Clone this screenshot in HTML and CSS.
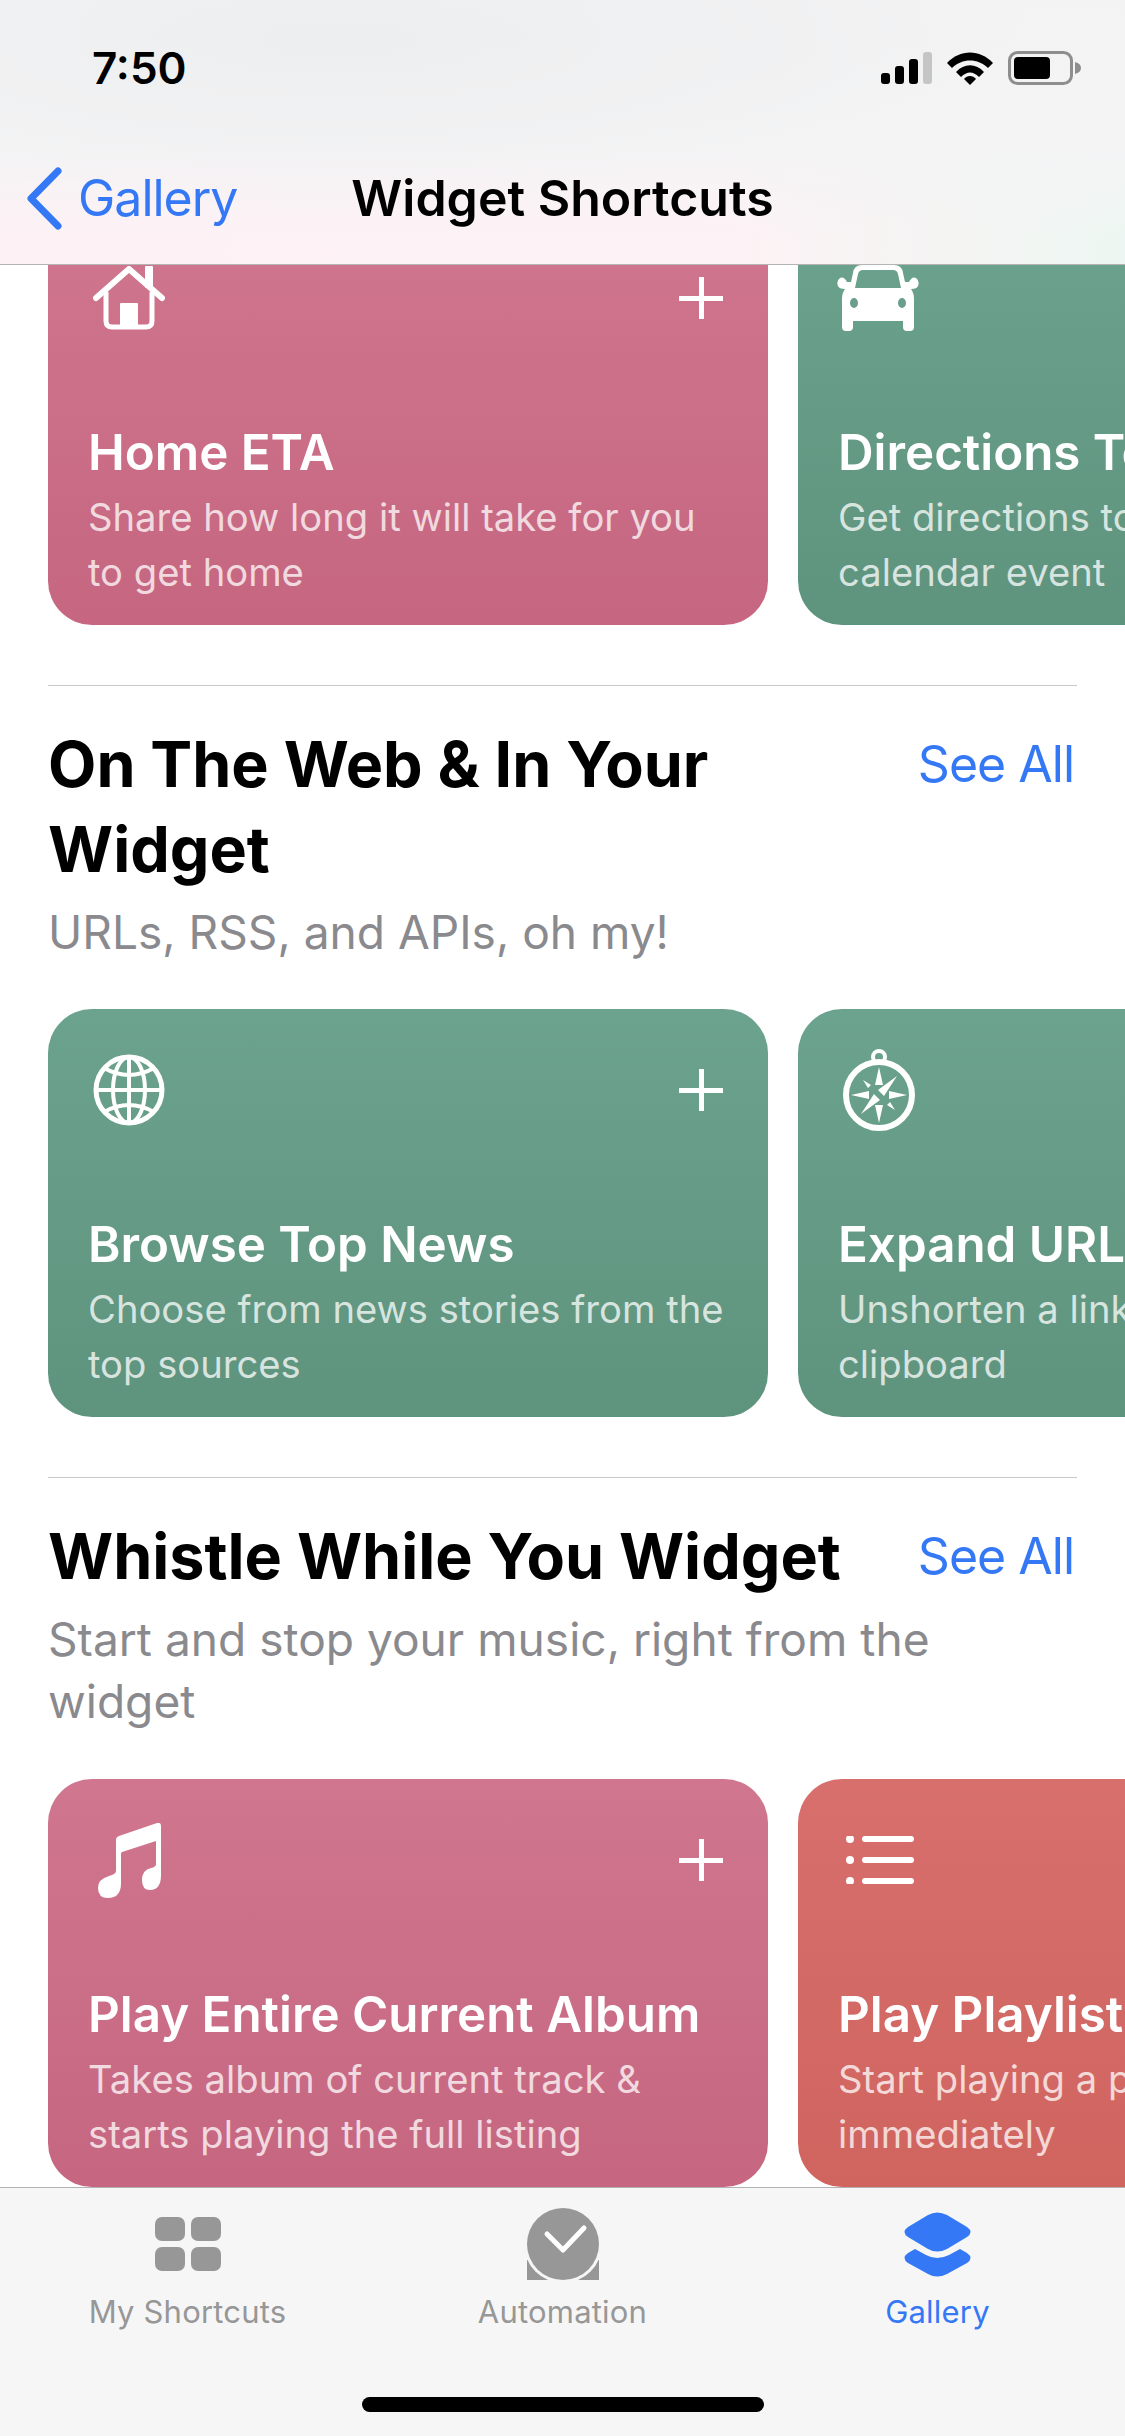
FILE: index.html
```html
<!DOCTYPE html>
<html lang="en">
<head>
    <meta charset="UTF-8">
    <title>Widget Shortcuts</title>
    <link rel="stylesheet" href="styles.css">
</head>
<body>
    <div class="phone">
        <!-- top bar -->
        <header class="top-bar">
            <div class="status-bar">
                <span class="time">7:50</span>
                <div class="status-icons">
                    <svg width="51" height="32" viewBox="0 0 51 32">
                        <rect x="0" y="21" width="9" height="11" rx="3" fill="#000"/>
                        <rect x="14" y="14" width="9" height="18" rx="3" fill="#000"/>
                        <rect x="28" y="7" width="9" height="25" rx="3" fill="#000"/>
                        <rect x="42" y="0" width="9" height="32" rx="3" fill="#c4c6c6"/>
                    </svg>
                    <svg width="46" height="33" viewBox="0 0 46 33">
                        <path d="M0 11 C13 -3 33 -3 46 11 L41 16 C31 6 15 6 5 16 Z" fill="#000"/>
                        <path d="M9 20 C17 11 29 11 37 20 L32 25 C26 19 20 19 14 25 Z" fill="#000"/>
                        <path d="M17 27 C20 23 26 23 29 27 L23 33 Z" fill="#000"/>
                    </svg>
                    <svg width="74" height="34" viewBox="0 0 74 34">
                        <rect x="1.5" y="1.5" width="62" height="31" rx="8" fill="none" stroke="#8e8e8e" stroke-width="3"/>
                        <rect x="6" y="6" width="36" height="22" rx="4" fill="#000"/>
                        <path d="M67 11 C71 12 73 14 73 17 C73 20 71 22 67 23 Z" fill="#8e8e8e"/>
                    </svg>
                </div>
            </div>
            <nav class="nav-row">
                <div class="back">
                    <svg width="36" height="63" viewBox="0 0 36 63">
                        <path d="M32 4 L5 31.5 L32 59" fill="none" stroke="#3478f6" stroke-width="7" stroke-linecap="round" stroke-linejoin="round"/>
                    </svg>
                    <span>Gallery</span>
                </div>
                <div class="nav-title">Widget Shortcuts</div>
                <div></div>
            </nav>
        </header>

        <main class="content">
            <div class="first-row cards">
                <div class="card pink">
                    <div class="card-top">
                        <svg class="icon" width="72" height="64" viewBox="0 0 72 64">
                            <path d="M3 32 L36 3 L69 32" fill="none" stroke="#fff" stroke-width="6" stroke-linecap="round" stroke-linejoin="round"/>
                            <path d="M13 26 V55 Q13 61 19 61 H53 Q59 61 59 55 V26" fill="none" stroke="#fff" stroke-width="5"/>
                            <rect x="27" y="37" width="18" height="25" rx="1" fill="#fff"/>
                            <rect x="52" y="0" width="8" height="22" rx="1" fill="#fff"/>
                        </svg>
                        <span class="plus"></span>
                    </div>
                    <div class="card-text">
                        <div class="card-title">Home ETA</div>
                        <div class="card-sub">Share how long it will take for you<br>to get home</div>
                    </div>
                </div>
                <div class="card green">
                    <div class="card-top">
                        <svg class="icon car" width="82" height="66" viewBox="0 0 82 66">
                            <path fill-rule="evenodd" fill="#fff" d="M16 8 Q17 0 25 0 H57 Q65 0 66 8 L68 17 H72 Q75 11 79 13 Q83 16 81 21 Q80 24 74 24 Q77 28 77 34 V62 Q77 66 73 66 H70 Q66 66 66 62 V56 H16 V62 Q16 66 12 66 H9 Q5 66 5 62 V34 Q5 28 8 24 Q2 24 1 21 Q-1 16 3 13 Q7 11 10 17 H14 Z M21 9 L18 23 H64 L61 9 Q60 5 56 5 H26 Q22 5 21 9 Z M13 38 A4 5 0 1 0 21 38 A4 5 0 1 0 13 38 Z M61 38 A4 5 0 1 0 69 38 A4 5 0 1 0 61 38 Z"/>
                        </svg>
                    </div>
                    <div class="card-text">
                        <div class="card-title">Directions To Next Event</div>
                        <div class="card-sub">Get directions to your next<br>calendar event</div>
                    </div>
                </div>
            </div>

            <section class="section">
                <div class="section-head">
                    <div class="section-titles">
                        <h2>On The Web &amp; In Your<br>Widget</h2>
                        <p>URLs, RSS, and APIs, oh my!</p>
                    </div>
                    <a class="see-all">See All</a>
                </div>
                <div class="cards">
                    <div class="card green">
                        <div class="card-top">
                            <svg class="icon" width="72" height="72" viewBox="0 0 72 72" fill="none" stroke="#fff">
                                <circle cx="36" cy="36" r="33" stroke-width="5"/>
                                <ellipse cx="36" cy="36" rx="16" ry="33" stroke-width="4"/>
                                <path d="M36 3 V69 M3 36 H69" stroke-width="4"/>
                                <path d="M11 14 Q36 28 61 14 M11 58 Q36 44 61 58" stroke-width="4"/>
                            </svg>
                            <span class="plus"></span>
                        </div>
                        <div class="card-text">
                            <div class="card-title">Browse Top News</div>
                            <div class="card-sub">Choose from news stories from the<br>top sources</div>
                        </div>
                    </div>
                    <div class="card green">
                        <div class="card-top">
                            <svg class="icon compass" width="72" height="82" viewBox="0 0 72 82">
                                <circle cx="36" cy="8" r="6" fill="none" stroke="#fff" stroke-width="4"/>
                                <circle cx="36" cy="46" r="33" fill="none" stroke="#fff" stroke-width="6"/>
                                <path fill="#fff" d="M36 18 L40 36 H32 Z M36 74 L32 56 H40 Z M8 46 L26 42 V50 Z M64 46 L46 50 V42 Z"/>
                                <path fill="#fff" d="M54 27 L41 47 L35 41 Z M18 65 L31 45 L37 51 Z"/>
                                <path fill="#fff" d="M20 31 L28 36 L25 39 Z M52 61 L44 56 L47 53 Z"/>
                            </svg>
                        </div>
                        <div class="card-text">
                            <div class="card-title">Expand URL</div>
                            <div class="card-sub">Unshorten a link on your<br>clipboard</div>
                        </div>
                    </div>
                </div>
            </section>

            <section class="section">
                <div class="section-head">
                    <div class="section-titles">
                        <h2>Whistle While You Widget</h2>
                        <p>Start and stop your music, right from the<br>widget</p>
                    </div>
                    <a class="see-all">See All</a>
                </div>
                <div class="cards">
                    <div class="card pink">
                        <div class="card-top">
                            <svg class="icon music" width="63" height="75" viewBox="0 0 63 75">
                                <path fill="#fff" d="M18 17 Q18 14 21 13 L59 0 Q63 -1 63 3 V52 Q63 67 52 67 Q44 67 44 57 Q44 47 53 45 Q58 44 58 41 V18 L24 29 Q23 29 23 32 V60 Q23 75 10 75 Q0 75 0 65 Q0 56 11 53 Q18 51 18 48 Z"/>
                            </svg>
                            <span class="plus"></span>
                        </div>
                        <div class="card-text">
                            <div class="card-title">Play Entire Current Album</div>
                            <div class="card-sub">Takes album of current track &amp;<br>starts playing the full listing</div>
                        </div>
                    </div>
                    <div class="card red">
                        <div class="card-top">
                            <svg class="icon list" width="68" height="48" viewBox="0 0 68 48" fill="#fff">
                                <circle cx="4" cy="3" r="4"/><rect x="16" y="0" width="52" height="6" rx="3"/>
                                <circle cx="4" cy="24" r="4"/><rect x="16" y="21" width="52" height="6" rx="3"/>
                                <circle cx="4" cy="45" r="4"/><rect x="16" y="42" width="52" height="6" rx="3"/>
                            </svg>
                        </div>
                        <div class="card-text">
                            <div class="card-title">Play Playlist</div>
                            <div class="card-sub">Start playing a playlist<br>immediately</div>
                        </div>
                    </div>
                </div>
            </section>
        </main>

        <!-- tab bar -->
        <footer class="tab-bar">
            <div class="tabs">
                <div class="tab">
                    <div class="tab-icon">
                        <svg width="66" height="54" viewBox="0 0 66 54" fill="#979797">
                            <rect x="0" y="0" width="30" height="24" rx="7"/>
                            <rect x="36" y="0" width="30" height="24" rx="7"/>
                            <rect x="0" y="30" width="30" height="24" rx="7"/>
                            <rect x="36" y="30" width="30" height="24" rx="7"/>
                        </svg>
                    </div>
                    <span>My Shortcuts</span>
                </div>
                <div class="tab">
                    <div class="tab-icon">
                        <svg width="72" height="72" viewBox="0 0 72 72">
                            <rect x="0" y="52" width="72" height="20" fill="#979797"/>
                            <circle cx="36" cy="36" r="39" fill="#f6f6f6"/>
                            <circle cx="36" cy="36" r="36" fill="#979797"/>
                            <path d="M20 26 L36 42 L57 20" fill="none" stroke="#fff" stroke-width="5" stroke-linecap="round" stroke-linejoin="round"/>
                        </svg>
                    </div>
                    <span>Automation</span>
                </div>
                <div class="tab active">
                    <div class="tab-icon">
                        <svg width="67" height="65" viewBox="0 0 67 65" fill="#3478f6">
                            <path d="M24 3 Q33 -2 43 3 L63 15 Q70 20 63 25 L43 37 Q33 42 24 37 L4 25 Q-3 20 4 15 Z"/>
                            <path d="M11 37 L22 43 Q33 49 45 43 L56 37 L63 41 Q70 46 63 51 L43 62 Q33 67 24 62 L4 51 Q-3 46 4 41 Z"/>
                        </svg>
                    </div>
                    <span>Gallery</span>
                </div>
            </div>
            <div class="home-indicator"></div>
        </footer>
    </div>
</body>
</html>
```

FILE: styles.css
```css
html, body {
    margin: 0;
    padding: 0;
    background-color: #fff;
}
body {
    font-family: Inter, "Liberation Sans", sans-serif;
    color: #000;
}
.phone {
    width: 1125px;
    height: 2436px;
    display: flex;
    flex-direction: column;
    overflow: hidden;
}

/* top bar */
.top-bar {
    height: 264px;
    flex: none;
    border-bottom: 1px solid #b4b4b4;
    background:
        radial-gradient(ellipse 700px 160px at 30% 15%, #edeeef, rgba(237, 238, 239, 0)),
        linear-gradient(180deg, #f3f3f4 0%, #f4f4f5 55%, rgba(245, 245, 246, 0) 90%),
        linear-gradient(90deg, #fdf1f5 0%, #fdf2f5 65%, #edf6f2 100%);
}
.status-bar {
    height: 136px;
    display: flex;
    align-items: center;
    justify-content: space-between;
    padding: 0 43px 0 92px;
}
.time {
    font-size: 44px;
    font-weight: 600;
}
.status-icons {
    display: flex;
    align-items: center;
    gap: 15px;
}
.nav-row {
    height: 124px;
    display: grid;
    grid-template-columns: 1fr auto 1fr;
    align-items: center;
}
.back {
    display: flex;
    align-items: center;
    gap: 16px;
    padding-left: 26px;
    font-size: 50px;
    letter-spacing: -1px;
    color: #3478f6;
}
.nav-title {
    font-size: 50px;
    font-weight: 600;
}

/* scrolling part */
.content {
    flex: 1;
    overflow: hidden;
}
.first-row {
    margin-top: -48px;
}
.section-head {
    display: flex;
    justify-content: space-between;
    align-items: flex-start;
    margin: 60px 48px 0;
    padding: 36px 3px 46px 0;
    border-top: 1px solid #c8c8c8;
}
.section:last-child .section-head {
    padding-bottom: 47px;
}
.section-titles {
    flex: 1;
    min-width: 0;
    white-space: nowrap;
}
h2 {
    margin: 0;
    font-size: 62.8px;
    line-height: 85px;
    font-weight: 700;
}
.section-titles p {
    margin: 9px 0 0;
    font-size: 46.1px;
    line-height: 62px;
    color: #8a8a8e;
}
.see-all {
    flex: none;
    font-size: 50px;
    line-height: 85px;
    letter-spacing: -1px;
    color: #3478f6;
}

/* cards */
.cards {
    display: flex;
    gap: 30px;
    padding-left: 48px;
    overflow: hidden;
}
.card {
    flex: 0 0 720px;
    height: 408px;
    box-sizing: border-box;
    padding: 40px 40px 25px;
    border-radius: 44px;
    display: flex;
    flex-direction: column;
    color: #fff;
    white-space: nowrap;
}
.pink {
    background: linear-gradient(180deg, #d0768f, #c66680);
}
.green {
    background: linear-gradient(180deg, #6ca38e, #5e937d);
}
.red {
    background: linear-gradient(180deg, #d76f6d, #d0645f);
}
.card-top {
    height: 82px;
    padding: 0 5px;
    display: flex;
    align-items: center;
    justify-content: space-between;
}
.car {
    margin-left: -6px;
}
.music {
    margin-left: 5px;
}
.list {
    margin-left: 3px;
}
.plus {
    width: 44px;
    height: 42px;
    background:
        linear-gradient(#fff, #fff) center / 100% 5px no-repeat,
        linear-gradient(#fff, #fff) center / 5px 100% no-repeat;
}
.card-text {
    margin-top: auto;
}
.card-title {
    font-size: 49.3px;
    line-height: 60px;
    font-weight: 600;
    margin-bottom: 8px;
}
.card-sub {
    font-size: 38.2px;
    line-height: 55px;
    color: rgba(255, 255, 255, 0.75);
}

/* tab bar */
.tab-bar {
    height: 249px;
    flex: none;
    box-sizing: border-box;
    border-top: 1px solid #b2b2b2;
    background-color: #f6f6f6;
    display: flex;
    flex-direction: column;
    align-items: center;
    padding-bottom: 24px;
}
.tabs {
    width: 100%;
    display: grid;
    grid-template-columns: 1fr 1fr 1fr;
    padding-top: 20px;
}
.tab {
    display: flex;
    flex-direction: column;
    align-items: center;
    gap: 14px;
    font-size: 31px;
    line-height: 36px;
    letter-spacing: 0.2px;
    color: #979797;
}
.tab.active {
    color: #3478f6;
}
.tab-icon {
    height: 72px;
    display: flex;
    align-items: center;
}
.home-indicator {
    width: 402px;
    height: 15px;
    margin-top: auto;
    border-radius: 8px;
    background-color: #000;
}
```
